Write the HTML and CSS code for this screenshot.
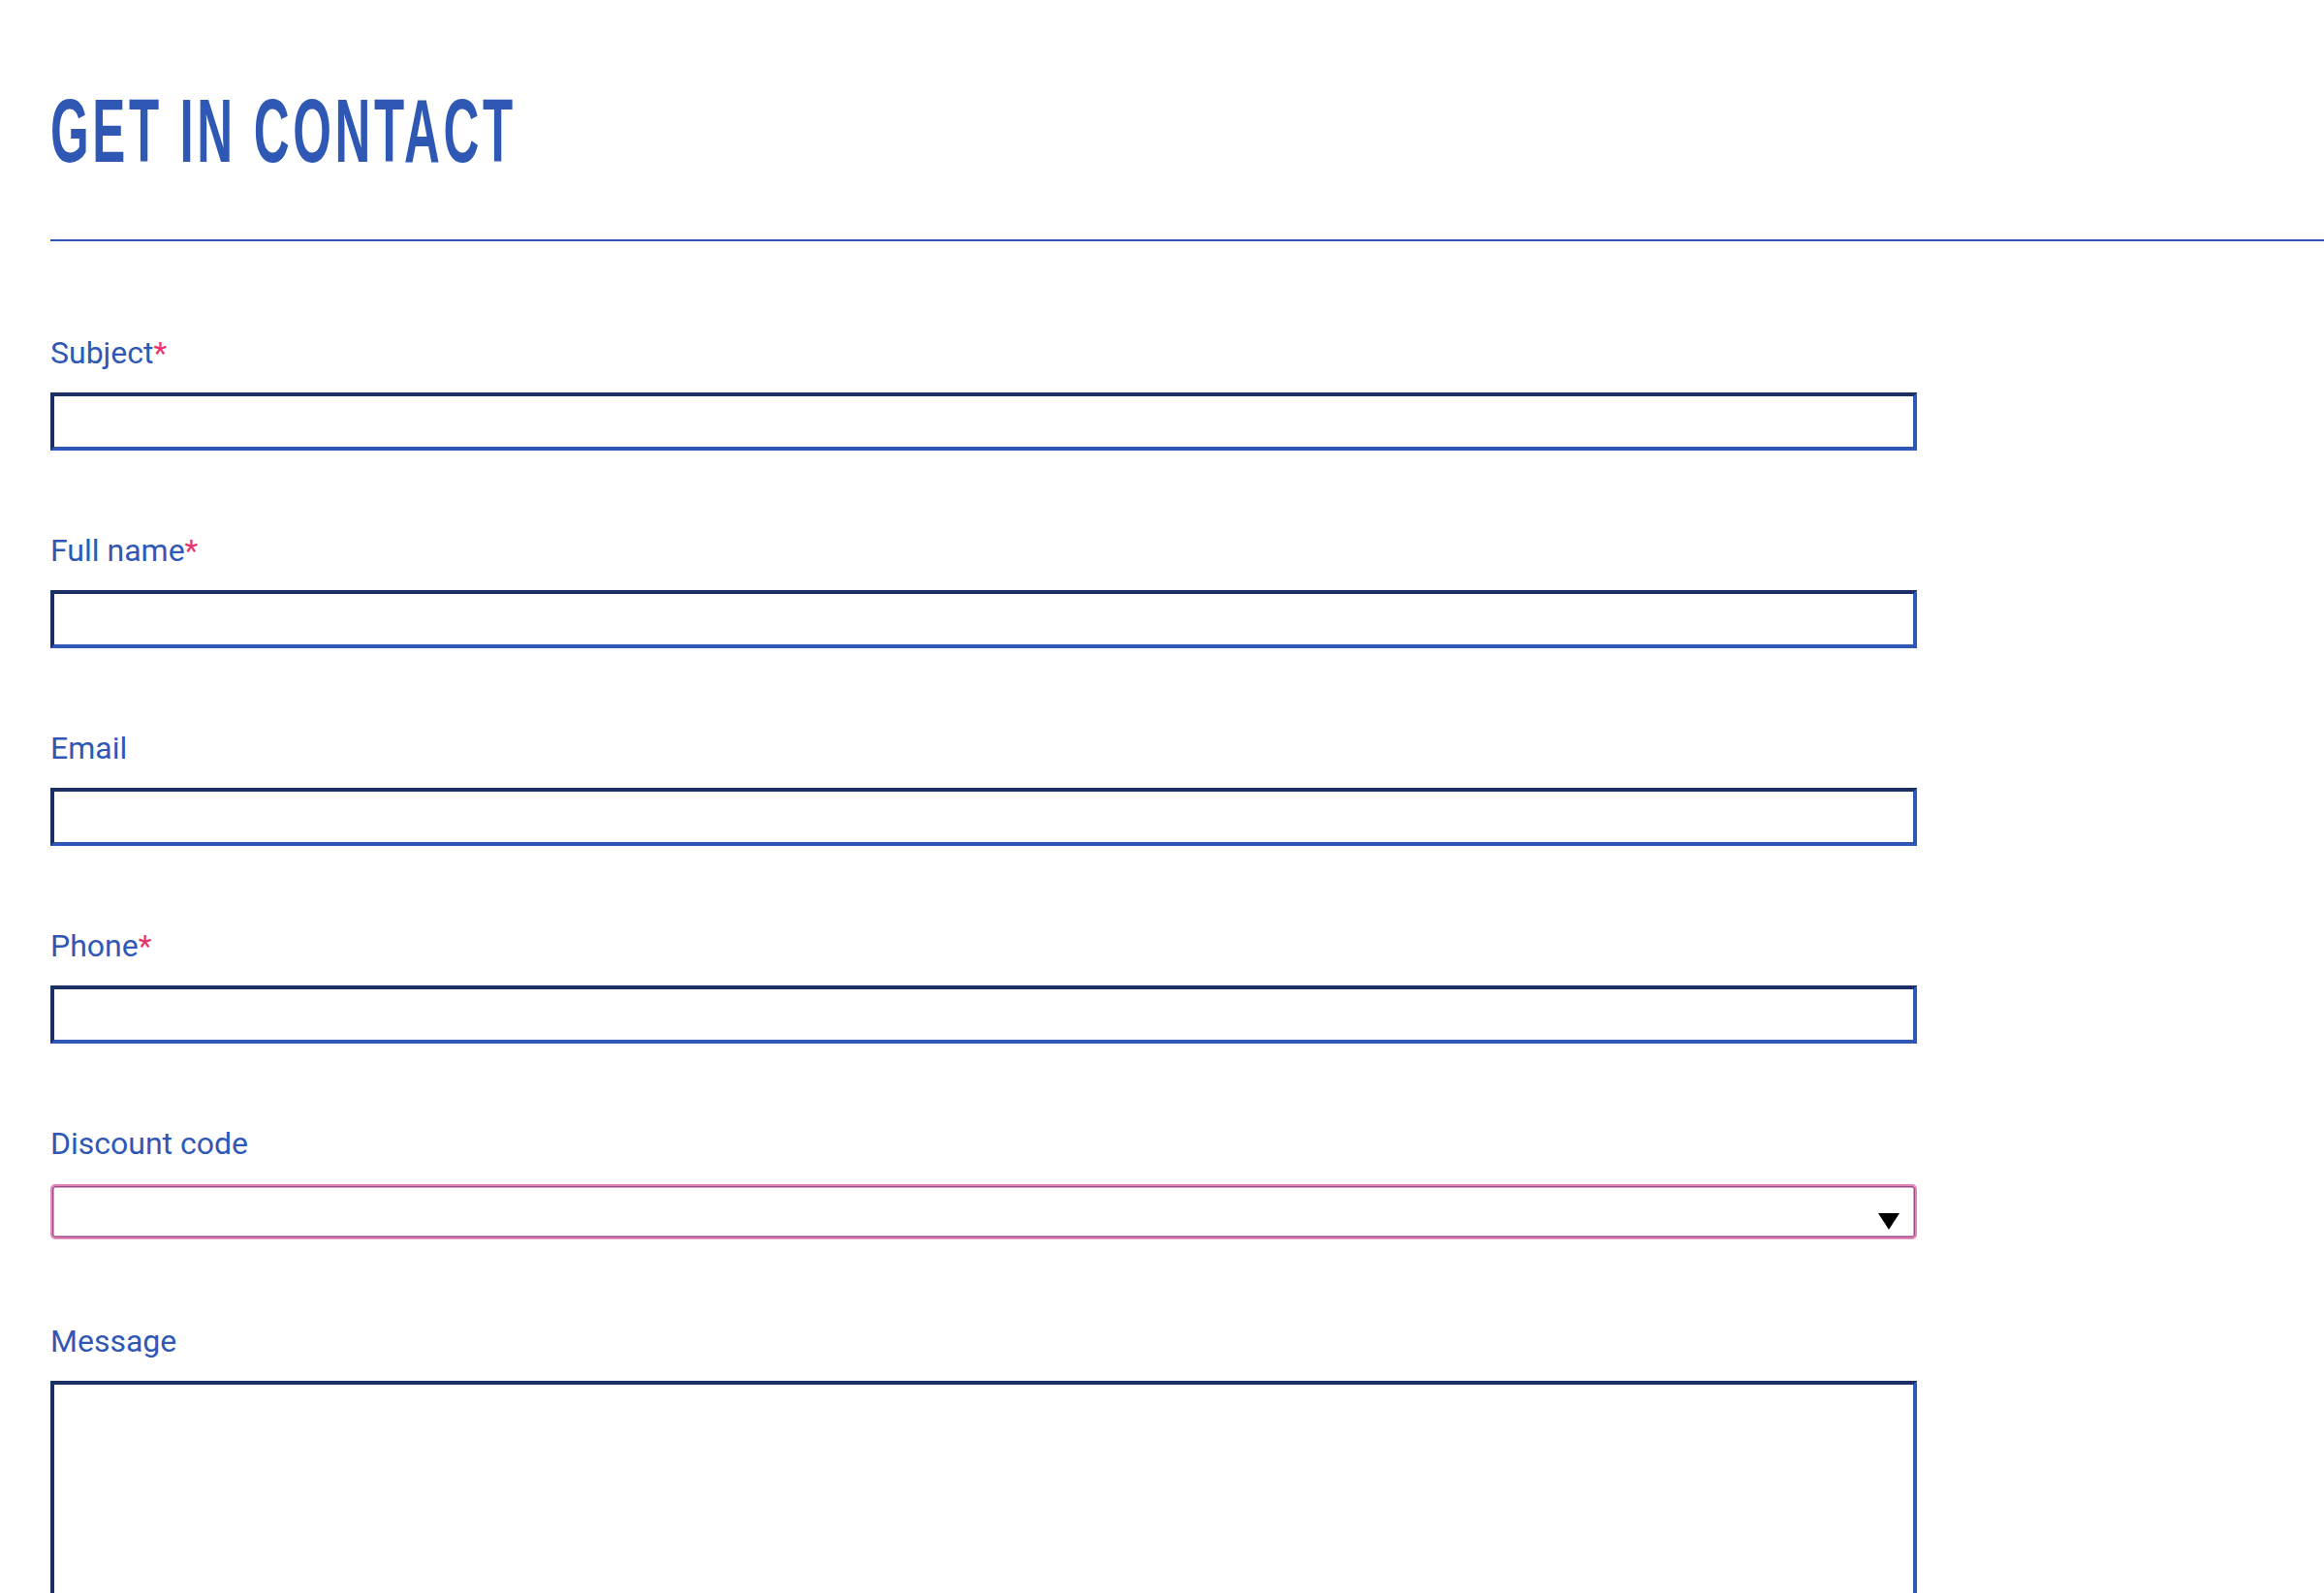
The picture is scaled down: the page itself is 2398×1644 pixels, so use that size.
FILE: index.html
```html
<!DOCTYPE html>
<html lang="en">
<head>
<meta charset="utf-8">
<title>Get in contact</title>
<link rel="stylesheet" href="styles.css">
</head>
<body>
<main class="page">
  <h1 class="title"><span class="title-text">GET IN CONTACT</span></h1>
  <div class="rule"></div>
  <form class="form">
    <div class="field">
      <label class="label" for="subject">Subject<span class="req">*</span></label>
      <input class="input" id="subject" type="text">
    </div>
    <div class="field">
      <label class="label" for="fullname">Full name<span class="req">*</span></label>
      <input class="input" id="fullname" type="text">
    </div>
    <div class="field">
      <label class="label" for="email">Email</label>
      <input class="input" id="email" type="email">
    </div>
    <div class="field">
      <label class="label" for="phone">Phone<span class="req">*</span></label>
      <input class="input" id="phone" type="tel">
    </div>
    <div class="field field-select">
      <label class="label" for="discount">Discount code</label>
      <div class="select-wrap">
        <select class="select" id="discount"><option></option></select>
        <svg class="select-arrow" width="22" height="17" viewBox="0 0 22 17" aria-hidden="true"><polygon points="0,0 22,0 11,17" fill="#000"/></svg>
      </div>
    </div>
    <div class="field">
      <label class="label" for="message">Message</label>
      <textarea class="input textarea" id="message"></textarea>
    </div>
  </form>
</main>
</body>
</html>
```

FILE: styles.css
```css
html, body {
  margin: 0;
  padding: 0;
  background: #ffffff;
  overflow: hidden;
}

.page {
  padding: 90px 0 0 52px;
}

.title {
  margin: 0;
  height: 91px;
  font-family: "Liberation Sans", Arial, sans-serif;
  font-weight: 700;
  font-size: 92px;
  line-height: 91px;
  letter-spacing: 6.5px;
  color: #2f58b4;
  white-space: nowrap;
}

.title-text {
  display: inline-block;
  transform: scaleX(0.555);
  transform-origin: left center;
}

.rule {
  margin-top: 66px;
  height: 0;
  border-top: 2px solid #2f56b1;
}

.form {
  display: flex;
  flex-direction: column;
  margin-top: 95px;
  width: 1926px;
}

.field {
  display: flex;
  flex-direction: column;
  margin-bottom: 83px;
}

.field-select {
  margin-bottom: 85px;
}

.label {
  font-family: Roboto, "Liberation Sans", sans-serif;
  font-size: 32px;
  line-height: 40px;
  color: #2f58b6;
  margin-bottom: 21px;
}

.field-select .label {
  margin-bottom: 22px;
}

.req {
  color: #e8336b;
}

.input {
  box-sizing: border-box;
  display: block;
  width: 100%;
  height: 60px;
  margin: 0;
  padding: 0 12px;
  border-width: 4px;
  border-style: solid;
  border-color: #1b2e66 #2f57b5 #2f57b5 #1b2e66;
  border-radius: 0;
  background: #ffffff;
  font-family: Roboto, "Liberation Sans", sans-serif;
  font-size: 28px;
  outline: none;
}

.textarea {
  height: 320px;
  resize: none;
}

.select-wrap {
  position: relative;
  width: 100%;
}

.select {
  box-sizing: border-box;
  display: block;
  width: 100%;
  height: 57px;
  margin: 0;
  padding: 0 12px;
  appearance: none;
  -webkit-appearance: none;
  border: 2px solid #e487b8;
  border-radius: 5px;
  box-shadow: inset 0 0 0 1.5px #9b4b88;
  background: #ffffff;
  font-family: Roboto, "Liberation Sans", sans-serif;
  font-size: 28px;
  outline: none;
}

.select-arrow {
  position: absolute;
  right: 18px;
  top: 30px;
  pointer-events: none;
}
```
